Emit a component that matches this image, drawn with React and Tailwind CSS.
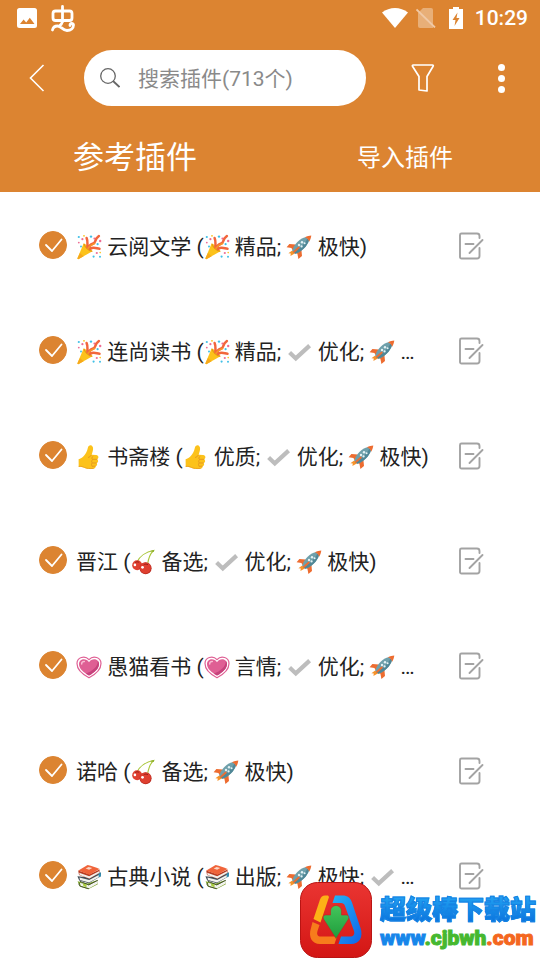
import React, { useState } from "react";

// Small pictures used inside the plugin titles
const emojiClass = "inline-block w-[26px] h-[26px] shrink-0 align-[-6px]";

const Party = () => (
  <svg viewBox="0 0 26 26" className={emojiClass} role="img" aria-label="party">
    <path d="M1.3 24.6 7.6 9.5c3.6 1.2 7.5 5 8.8 7.7L2.3 25.3z" fill="#fcc21b" />
    <path d="M1.3 24.6 4 19l3.6 3.3-5.3 3z" fill="#f7a81b" />
    <path d="M8 9.7c.2 2.8 5 7.6 8.3 7.6" fill="none" stroke="#e59a14" strokeWidth="1.2" />
    <path d="M11.5 13.2c-.3-3.6.6-5.8-.9-9.2M13 13.5c1.2-5 5.4-2.6 6.2-6.2.6-2.6 1.8-3.8 3.7-5.2M14 15c3-2.6 6.2-.6 9.5-.2" fill="none" stroke="#f2663c" strokeWidth="2.5" strokeLinecap="round" />
    <path d="M12 14.2c1.5-2.2 4-3.6 6.6-4.6" fill="none" stroke="#f79329" strokeWidth="1.6" strokeLinecap="round" />
    <g fill="#40c0e7">
      <circle cx="2.8" cy="3" r="1.1" />
      <circle cx="15" cy="2.6" r="1.2" />
      <circle cx="21.6" cy="10.2" r="1.1" />
      <circle cx="17.6" cy="22.6" r="1.1" />
      <circle cx="5" cy="12.6" r="1" />
      <circle cx="24" cy="22.8" r="1" />
    </g>
    <g fill="#ed6c94">
      <circle cx="6.4" cy="5.2" r="1.1" />
      <circle cx="18.4" cy="4.6" r="1" />
      <circle cx="24.2" cy="7" r="1.2" />
      <circle cx="20.8" cy="19" r="1.1" />
      <circle cx="2.8" cy="8.6" r=".9" />
    </g>
    <g fill="#fcc21b">
      <circle cx="8" cy="1.8" r=".9" />
      <circle cx="24.2" cy="18.6" r=".8" />
    </g>
  </svg>
);

const Rocket = () => (
  <svg viewBox="0 0 26 26" className={emojiClass} role="img" aria-label="rocket">
    <path d="M9.8 10.6 3.4 10 .6 13.2l4.8.9 1.6 2.6zM15.4 15.8l.6 6.2-3.6 3-1-5.2-2.6-1.4z" fill="#ed6c30" />
    <path d="m6.2 16.4-3.8 2.8 2.4.2-.4 2.6 4.8-2.8z" fill="#f79329" />
    <path d="M6.2 16.8C8 10.2 13.6 4.4 20 3l3 3.2C21.4 12 15.4 18 9.2 19.8z" fill="#6fa0ab" />
    <path d="M7.4 18c5-2 11.4-7.4 14-13.4l1.6 1.6C21.4 12 15.4 18 9.2 19.8z" fill="#508796" />
    <path d="M19 3.3c2-.9 4.4-1.6 6.3-1.7-.2 2-1 4.4-2.1 6.2-.6-2-2.1-3.6-4.2-4.5z" fill="#ed6c30" />
    <path d="m8 17.9 4.8-4.4" stroke="#ed6c30" strokeWidth="1.8" strokeLinecap="round" />
    <g fill="#e4f2f5">
      <circle cx="13" cy="11" r="1.2" />
      <circle cx="16" cy="8.3" r="1.2" />
      <circle cx="15.6" cy="12.4" r="1.1" />
      <circle cx="18.6" cy="9.2" r="1" />
    </g>
  </svg>
);

const Thumb = () => (
  <svg viewBox="0 0 26 26" className={emojiClass} role="img" aria-label="thumbs up">
    <path d="M2.6 15.2c1.8-.6 3.8-1.3 5.6-3.7 1.6-2.2 3-4.4 3.6-7.6.4-2.2 2.4-3.2 4-2.2 2.2 1.4 1.2 5.6-.2 9l4.600.3c2.700.2 2.900 3.500.9 4.200 1.600 1 1.300 3.400-.5 3.700 1 1.200.6 3-1.100 3.400.5 1.200-.5 2.300-2.200 2.400-4.200.3-7 .1-9.600-1.100-1.600-.8-3-.9-5-.9z" fill="#fcc21b" />
    <path d="M15.4 11.2c-.8 1.2-2 1.8-3 2.2M17 15.300h3.900M16.600 19h3.700M16.200 22.200h3M17 12.400c-1.700 1-1.500 2.500-.3 3.200-1.400.8-1.400 2.600-.3 3.300-1.300.8-1.200 2.600-.2 3.400" fill="none" stroke="#e79a1f" strokeWidth="1" strokeLinecap="round" />
    <path d="M2.7 22.400c3-.2 4.200.2 5.600 1 2.400 1.200 5.600 1.300 9.300 1" fill="none" stroke="#eda621" strokeWidth="1" />
  </svg>
);

const Cherry = () => (
  <svg viewBox="0 0 26 26" className={emojiClass} role="img" aria-label="cherries">
    <path d="M7 13C9.6 7.5 16 2.800 23.500 1.500 20 5 18.300 9.400 17.600 15.500" fill="none" stroke="#a9c63b" strokeWidth="1.100" />
    <path d="m20 2 4-1-.1 1.900z" fill="#8bad2c" />
    <circle cx="7.200" cy="16.200" r="5" fill="#df4030" />
    <circle cx="15.600" cy="19.200" r="6" fill="#b92b20" />
    <circle cx="15.400" cy="18.900" r="5.500" fill="#df4030" />
    <path d="M5.200 13.700c.8-1 2.700-1.300 3.900-.3M13.600 16c1.100-1.100 3.300-1.200 4.400-.2" fill="none" stroke="#9b2019" strokeWidth="1" />
    <circle cx="4.900" cy="15.900" r="1.300" fill="#fff" />
    <circle cx="12.500" cy="18.300" r="1.400" fill="#fff" />
  </svg>
);

const Heart = () => (
  <svg viewBox="0 0 26 26" className={emojiClass} role="img" aria-label="growing heart">
    <path d="M13 23.8C6.4 20.4 1 15.8 1 9.6 1 3.6 8.6.8 13 5.6 17.4.8 25 3.6 25 9.6c0 6.2-5.4 10.8-12 14.2z" fill="#fff" stroke="#df5f94" strokeWidth="1.2" />
    <path d="M13 21.500C7.400 18.300 3 14.600 3 9.900c0-4.800 6.700-6.700 10-1.700 3.300-5 10-3.100 10 1.700 0 4.700-4.400 8.400-10 11.600z" fill="#df5f94" />
    <path d="M13 21.500c5.600-3.200 10-6.900 10-11.600 0-1.100-.5-2.200-1.200-2.900.2 5.900-5.600 10.200-11.800 12.500z" fill="#c6427c" />
    <path d="M5.700 10c-.1-1.600 1-2.700 2.600-2.600" fill="none" stroke="#f9bdd4" strokeWidth="1.5" strokeLinecap="round" />
  </svg>
);

const Books = () => (
  <svg viewBox="0 0 26 26" className={emojiClass} role="img" aria-label="books">
    <path d="m1.6 17.2 2.2 5.4 8.4 2.7 9.6-5-.4-4.2-9.6 3.5z" fill="#7ea32a" />
    <path d="m3.8 18.8 9 2.4 8.8-4.6.2 3-9 4.8-8-2.5z" fill="#f2f2ee" />
    <path d="M3.8 18.8c-1.2 1-.9 2.8.9 3.6l8.1 2.3M4 17.3l8.8 3.6 9-4.6" fill="none" stroke="#3d4a2c" strokeWidth=".9" />
    <path d="m7 19.4 3.5 1.1.1 2.8-3.2-1z" fill="#a8cc3d" />
    <path d="m1.4 12.2 1.8 4.4 9.6 2.7 12-7 .2-3.8-11.2 5z" fill="#424f58" />
    <path d="m3.4 13.6 9.8 2.4 11-5.8v2.4L13 18.5l-9-2.4z" fill="#f2f2ee" />
    <path d="m22.4 9.1 2.4-.7.1 3.8-2.1 1.2z" fill="#2d8fb5" />
    <path d="M2.2 6.6 3 11l10.4 3.8 10-5.8.2-3.4-10.2 4.6z" fill="#b83c22" />
    <path d="m3.2 8.8 10 3.5 9.8-5.1v1.7l-9.6 5.5L3.6 11z" fill="#f2f2ee" />
    <path d="m2.4 6.6 9.2-5.5c4 .8 8 2.2 12 4L13.4 10.8z" fill="#f0643a" />
    <path d="m9.6 4.6 3-1.7 3.6 1.1-3.1 1.8z" fill="#fbd7c5" />
  </svg>
);

const Tick = () => (
  <svg viewBox="0 0 26 26" className={emojiClass} role="img" aria-label="tick">
    <path d="m3.6 13.400 6.200 6L23.600 6.600" fill="none" stroke="#bdbdbd" strokeWidth="4.2" />
  </svg>
);

const plugins = [
  { id: 1, title: <><Party /> 云阅文学 (<Party /> 精品; <Rocket /> 极快)</> },
  { id: 2, title: <><Party /> 连尚读书 (<Party /> 精品; <Tick /> 优化; <Rocket /> …</> },
  { id: 3, title: <><Thumb /> 书斋楼 (<Thumb /> 优质; <Tick /> 优化; <Rocket /> 极快)</> },
  { id: 4, title: <>晋江 (<Cherry /> 备选; <Tick /> 优化; <Rocket /> 极快)</> },
  { id: 5, title: <><Heart /> 愚猫看书 (<Heart /> 言情; <Tick /> 优化; <Rocket /> …</> },
  { id: 6, title: <>诺哈 (<Cherry /> 备选; <Rocket /> 极快)</> },
  { id: 7, title: <><Books /> 古典小说 (<Books /> 出版; <Rocket /> 极快; <Tick /> …</> },
];

function StatusBar() {
  return (
    <div className="flex h-9 items-center justify-between pl-[17px] pr-3">
      <div className="flex items-center gap-3">
        <svg viewBox="0 0 20 20" className="h-5 w-5" fill="#fff">
          <path fillRule="evenodd" d="M2.5 0h15A2.5 2.5 0 0 1 20 2.500v15a2.500 2.500 0 0 1-2.500 2.500h-15A2.500 2.500 0 0 1 0 17.500v-15A2.500 2.500 0 0 1 2.500 0zM3 16h14.500l-4.700-6.200-3.600 4.600-2.600-3z" />
        </svg>
        <svg viewBox="0 0 26 28" className="h-7 w-[26px]" fill="none" stroke="#fff" strokeWidth="2.800" strokeLinecap="round" strokeLinejoin="round">
          <path d="M13.500 2.500v15M6.500 7h14a2.500 2.500 0 0 1 2.500 2.500v4.500a2.500 2.500 0 0 1-2.500 2.500h-14A2.500 2.500 0 0 1 4 14V9.500A2.500 2.500 0 0 1 6.500 7z" />
          <path d="M3.500 26c.5-2.500 2.500-4 5-4 4 0 5 4.500 9.500 4.500 4 0 6.500-2.500 6.500-5.500 0-2-3.500-2.200-3.500.5M13.500 17.500c-.5 2-1.500 3.500-3 4.500" />
        </svg>
      </div>
      <div className="flex items-center">
        <svg viewBox="0 0 26 20" className="h-5 w-[26px]" fill="#fff">
          <path d="M0 4.600C7.500-1.500 18.500-1.500 26 4.600L13 20z" />
        </svg>
        <svg viewBox="0 0 20 20" className="ml-2 h-5 w-5">
          <path d="M7 0h8a2 2 0 0 1 2 2v18H4a2 2 0 0 1-2-2V5z" fill="#fff" fillOpacity=".35" />
          <path d="m.500 1.500 18.500 18" stroke="#f0c9a6" strokeWidth="1.800" />
        </svg>
        <svg viewBox="0 0 14 22" className="ml-[13px] h-[22px] w-[14px]">
          <path d="M4 0h6v2h4v20H0V2h4z" fill="#fff" />
          <path d="M8.500 5.500 3.500 13H6.500l-1 6 5-8H7.500z" fill="#dc8431" />
        </svg>
        <span className="ml-3 text-[21px] font-medium leading-6">10:29</span>
      </div>
    </div>
  );
}

function Toolbar() {
  return (
    <div className="flex h-[84px] items-center pr-[15px]">
      <button aria-label="Back" className="flex h-14 w-[84px] items-center pl-[29px]">
        <svg viewBox="0 0 16 28" className="h-7 w-4" fill="none" stroke="#fff" strokeWidth="1.600">
          <path d="M14.500 1 1.500 14l13 13" />
        </svg>
      </button>
      <label className="flex h-14 min-w-0 flex-1 items-center gap-[18px] rounded-full bg-white pl-4 pr-6">
        <svg viewBox="0 0 20 20" className="h-5 w-5 shrink-0" fill="none" stroke="#666" strokeWidth="1.300">
          <circle cx="8" cy="8" r="7.300" />
          <path d="m13 13 6.500 6" strokeWidth="1.800" />
        </svg>
        <input
          type="text"
          aria-label="搜索插件"
          placeholder="搜索插件(713个)"
          className="min-w-0 flex-1 bg-transparent pt-0.5 text-[21px] leading-7 text-[#222] outline-none placeholder:text-[#8a8a8a]"
        />
      </label>
      <button aria-label="Filter" className="flex h-14 w-28 items-center justify-center pl-0.5">
        <svg viewBox="0 0 24 28" className="h-7 w-6" fill="none" stroke="#fff" strokeWidth="1.700" strokeLinejoin="round">
          <path d="M2.200 1h19.300c.7 0 1 .7.600 1.200L16 12.500V27l-8-1V12.500L1.500 2.200C1.100 1.700 1.500 1 2.200 1z" />
        </svg>
      </button>
      <button aria-label="More" className="flex h-14 flex-col items-center justify-center gap-1 px-5">
        <span className="h-[7px] w-[7px] rounded-full bg-white" />
        <span className="h-[7px] w-[7px] rounded-full bg-white" />
        <span className="h-[7px] w-[7px] rounded-full bg-white" />
      </button>
    </div>
  );
}

function PluginRow({ id, title, checked, onToggle }) {
  return (
    <li className="flex h-[105px] items-center pl-[39px] pr-14">
      <span className="relative h-7 w-7 shrink-0">
        <input
          id={`plugin-${id}`}
          type="checkbox"
          checked={checked}
          onChange={onToggle}
          className="block h-7 w-7 appearance-none rounded-full border border-[#dc8431] checked:bg-[#dc8431]"
        />
        {checked && (
          <svg viewBox="0 0 28 28" className="pointer-events-none absolute inset-0 h-7 w-7" fill="none" stroke="#fff" strokeWidth="1.800" strokeLinecap="round" strokeLinejoin="round">
            <path d="m7 14 6 6L22.500 8.500" />
          </svg>
        )}
      </span>
      <label htmlFor={`plugin-${id}`} className="ml-[9px] min-w-0 flex-1 whitespace-nowrap pt-1 text-[21px] leading-7 text-[#222]">
        {title}
      </label>
      <button aria-label="Edit" className="shrink-0 pt-0.5">
        <svg viewBox="0 0 26 28" className="h-7 w-[26px]" fill="none" stroke="#a3a3a3" strokeWidth="1.900" strokeLinecap="round">
          <path d="M21.500 6V4a2.500 2.500 0 0 0-2.500-2.500H3.500a1.500 1.500 0 0 0-1.500 1.500v22a1.500 1.500 0 0 0 1.500 1.500H19a2.500 2.500 0 0 0 2.500-2.500v-8" />
          <path d="M7.500 12h8M11.500 21 24.500 8" />
        </svg>
      </button>
    </li>
  );
}

function SiteBadge() {
  return (
    <div className="absolute bottom-0.5 right-0 flex items-center gap-2">
      <svg viewBox="0 0 72 76" className="h-[76px] w-[72px]">
        <defs>
          <linearGradient id="badge" x1="0" y1="0" x2="0" y2="1">
            <stop offset="0" stopColor="#ea3532" />
            <stop offset="1" stopColor="#d31614" />
          </linearGradient>
          <linearGradient id="blue" x1="0" y1="0" x2="1" y2="1">
            <stop offset="0" stopColor="#25b3f5" />
            <stop offset="1" stopColor="#1065ea" />
          </linearGradient>
          <linearGradient id="arrow" x1="0" y1="0" x2="0" y2="1">
            <stop offset="0" stopColor="#43c55b" />
            <stop offset="1" stopColor="#1f9c3c" />
          </linearGradient>
        </defs>
        <rect x=".5" y=".5" width="71" height="75" rx="17" fill="url(#badge)" stroke="#b91413" />
        <path d="M28 13.500h-3c-2.500 0-4 1.500-5 4L13.500 37l7 3.500L29 15z" fill="#fdb116" />
        <path d="M12.500 40 11 46c-3 9 1 16 9 16h14.500l2.500-7.500H21c-3.500 0-4.500-2-3.500-5.500l2-6z" fill="#f77c1c" />
        <path d="M35 13.500h7.500c5 0 8 2.500 9.500 7L60.500 46c3 9-1 16-9.500 16H38.500l2.500-7.500h9c3.500 0 5-2 4-5.500L45 24c-.8-2.200-2-3-4-3h-8.500z" fill="url(#blue)" />
        <path d="M30.500 29a5.500 5.500 0 0 1 11 0v4h5c2 0 3 2 2 4L36 56.500 23.500 37c-1-2 0-4 2-4h5z" fill="url(#arrow)" stroke="#c11b19" strokeOpacity=".5" />
      </svg>
      <div className="pr-1 pt-1">
        <p className="bg-linear-to-b from-[#27a9f5] to-[#0b70dc] bg-clip-text font-['Noto_Sans_CJK_SC',sans-serif] text-[26px] font-black leading-8 text-transparent [-webkit-text-stroke:1px_#1583e4]">
          超级棒下载站
        </p>
        <a href="#" className="block font-['Roboto',sans-serif] text-[21px] font-black leading-7">
          <span className="text-[#1686ea] [-webkit-text-stroke:1px_#1686ea]">www</span>
          <span className="text-[#46b82f] [-webkit-text-stroke:1px_#46b82f]">.cjbwh</span>
          <span className="text-[#f4671e] [-webkit-text-stroke:1px_#f4671e]">.com</span>
        </a>
      </div>
    </div>
  );
}

export default function App() {
  const [disabled, setDisabled] = useState([]);
  const [tab, setTab] = useState("reference");

  const handleToggle = (id) => {
    setDisabled((prev) =>
      prev.includes(id) ? prev.filter((item) => item !== id) : [...prev, id]
    );
  };

  const tabSize = (name) => (tab === name ? "text-[31px]" : "text-[24px]");

  return (
    <div className="relative min-h-screen w-full bg-white font-['Roboto','Noto_Sans_CJK_SC',sans-serif]">
      <header className="bg-[#dc8431] text-white">
        <StatusBar />
        <Toolbar />

        {/* Tabs */}
        <nav className="grid h-[72px] grid-cols-2 pt-1">
          <button onClick={() => setTab("reference")} className={tabSize("reference")}>
            参考插件
          </button>
          <button onClick={() => setTab("import")} className={tabSize("import")}>
            导入插件
          </button>
        </nav>
      </header>

      {/* Plugin list */}
      <ul>
        {plugins.map((plugin) => (
          <PluginRow
            key={plugin.id}
            id={plugin.id}
            title={plugin.title}
            checked={!disabled.includes(plugin.id)}
            onToggle={() => handleToggle(plugin.id)}
          />
        ))}
      </ul>

      <SiteBadge />
    </div>
  );
}
